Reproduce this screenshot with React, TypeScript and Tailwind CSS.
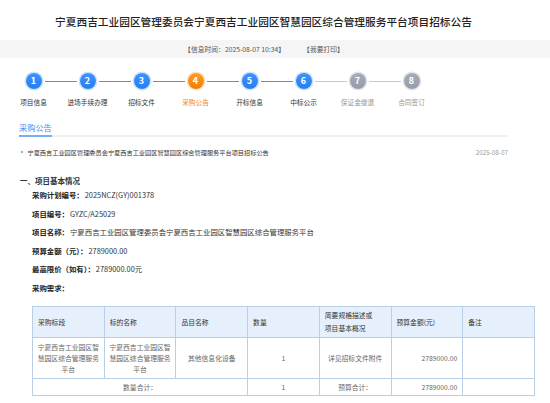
import React from 'react';

const steps = [
  { n: 1, label: '项目信息' },
  { n: 2, label: '进场手续办理' },
  { n: 3, label: '招标文件' },
  { n: 4, label: '采购公告' },
  { n: 5, label: '开标信息' },
  { n: 6, label: '中标公示' },
  { n: 7, label: '保证金缴退' },
  { n: 8, label: '合同签订' },
];

const CURRENT = 4;
const DONE_UNTIL = 6;

function Step({ n, label }: { n: number; label: string }) {
  const leftColor = n === 1 ? 'bg-transparent' : n <= DONE_UNTIL ? 'bg-[#4a92ee]' : 'bg-[#c9c9c9]';
  const rightColor = n === 8 ? 'bg-transparent' : n + 1 <= DONE_UNTIL ? 'bg-[#4a92ee]' : 'bg-[#c9c9c9]';
  const circle =
    n === CURRENT
      ? 'bg-gradient-to-b from-[#fb9d24] to-[#f27c02] shadow-[0_0_0_1.5px_#fde3c4]'
      : n <= DONE_UNTIL
        ? 'bg-gradient-to-b from-[#3d94fb] to-[#257ef0] shadow-[0_0_0_1.5px_#cfe2fc]'
        : 'bg-gradient-to-b from-[#a7adb8] to-[#959ba7] shadow-[0_0_0_1.5px_#e3e5e9]';
  const text = n === CURRENT ? 'text-[#f5820f]' : n <= DONE_UNTIL ? 'text-[#333]' : 'text-[#999]';
  return (
    <div className="flex w-[54px] flex-col items-center">
      <div className="flex w-full items-center">
        <div className={`h-px flex-1 ${leftColor} mr-[3px]`} />
        <div className={`flex h-[16px] w-[16px] items-center justify-center rounded-full text-[9px] font-bold text-white ${circle}`}>
          {n}
        </div>
        <div className={`h-px flex-1 ${rightColor} ml-[3px]`} />
      </div>
      <div className={`mt-[8.5px] whitespace-nowrap text-[6.7px] leading-[9px] ${text}`}>{label}</div>
    </div>
  );
}

const fields = [
  { k: '采购计划编号：', v: '2025NCZ(GY)001378' },
  { k: '项目编号：', v: 'GYZC/A25029' },
  { k: '项目名称：', v: '宁夏西吉工业园区管理委员会宁夏西吉工业园区智慧园区综合管理服务平台' },
  { k: '预算金额（元）：', v: '2789000.00' },
  { k: '最高限价（如有）：', v: '2789000.00元' },
];

const th = 'border border-[#b9cfe6] px-[5px] text-left align-middle font-normal text-[#333]';
const td = 'border border-[#b9cfe6] px-[4px] text-center align-middle text-[#666]';

export default function App() {
  return (
    <div className="w-[550px] min-h-[403px] overflow-hidden bg-white font-['Noto_Sans_CJK_SC',sans-serif] text-[#333]">
      <div className="flex h-[40px] items-center justify-center pr-[23px] pt-[5px] text-[10.7px] font-medium text-[#222]">
        宁夏西吉工业园区管理委员会宁夏西吉工业园区智慧园区综合管理服务平台项目招标公告
      </div>
      <div className="flex h-[18px] items-center justify-center gap-[18px] bg-[#f5f5f5] pr-[22px] text-[6.8px] text-[#555]">
        <span>【信息时间：2025-08-07 10:34】</span>
        <span>【我要打印】</span>
      </div>

      <div className="flex pl-[6.5px] pt-[15px]">
        {steps.map((s) => (
          <Step key={s.n} {...s} />
        ))}
      </div>

      <div className="mx-[19px] mt-[15.5px] w-[489px]">
        <div className="text-[8.2px] leading-[10px] text-[#3e8ef7]">采购公告</div>
        <div className="mt-[3px] h-[2px] bg-[#f0f0f0]">
          <div className="h-full w-[33px] bg-[#76aef7]" />
        </div>
        <div className="mt-[10.5px] flex items-center text-[6.2px] leading-[9px]">
          <span className="ml-[1.5px] mr-[5px] h-[2px] w-[2px] bg-[#aaa]" />
          <span className="flex-1 text-[#333]">宁夏西吉工业园区管理委员会宁夏西吉工业园区智慧园区综合管理服务平台项目招标公告</span>
          <span className="text-[6.3px] text-[#999]">2025-08-07</span>
        </div>
      </div>

      <div className="ml-[20px] mt-[19.5px] text-[7.5px] font-bold leading-[10px] text-[#333]">一、项目基本情况</div>
      <div className="ml-[32px]">
        {fields.map((f) => (
          <div key={f.k} className="text-[7.4px] leading-[18.5px] text-[#333]">
            <span className="font-bold text-[#222]">{f.k}</span>
            <span className="ml-[1px]">{f.v}</span>
          </div>
        ))}
        <div className="text-[7.4px] font-bold leading-[18.5px] text-[#222]">采购需求：</div>

        <table className="mt-[9px] w-[503px] table-fixed border-collapse text-[6.8px]">
          <thead>
            <tr className="h-[31px] bg-[#e6f0fc] leading-[13px]">
              <th className={th}>采购标段</th>
              <th className={th}>标的名称</th>
              <th className={th}>品目名称</th>
              <th className={th}>数量</th>
              <th className={th}>
                简要规格描述或
                <br />
                项目基本概况
              </th>
              <th className={th}>预算金额(元)</th>
              <th className={th}>备注</th>
            </tr>
          </thead>
          <tbody>
            <tr className="h-[41px] leading-[11px]">
              <td className={td}>宁夏西吉工业园区智慧园区综合管理服务平台</td>
              <td className={td}>宁夏西吉工业园区智慧园区综合管理服务平台</td>
              <td className={td}>其他信息化设备</td>
              <td className={`${td} text-[#333]`}>1</td>
              <td className={td}>详见招标文件附件</td>
              <td className={`${td} px-[5px] text-right text-[#333]`}>2789000.00</td>
              <td className={td}></td>
            </tr>
            <tr className="h-[17px] leading-[11px]">
              <td className={td} colSpan={3}>数量合计：</td>
              <td className={`${td} text-[#333]`}>1</td>
              <td className={td}>预算合计：</td>
              <td className={`${td} px-[5px] text-right text-[#333]`}>2789000.00</td>
              <td className={td}></td>
            </tr>
          </tbody>
        </table>
      </div>
    </div>
  );
}
